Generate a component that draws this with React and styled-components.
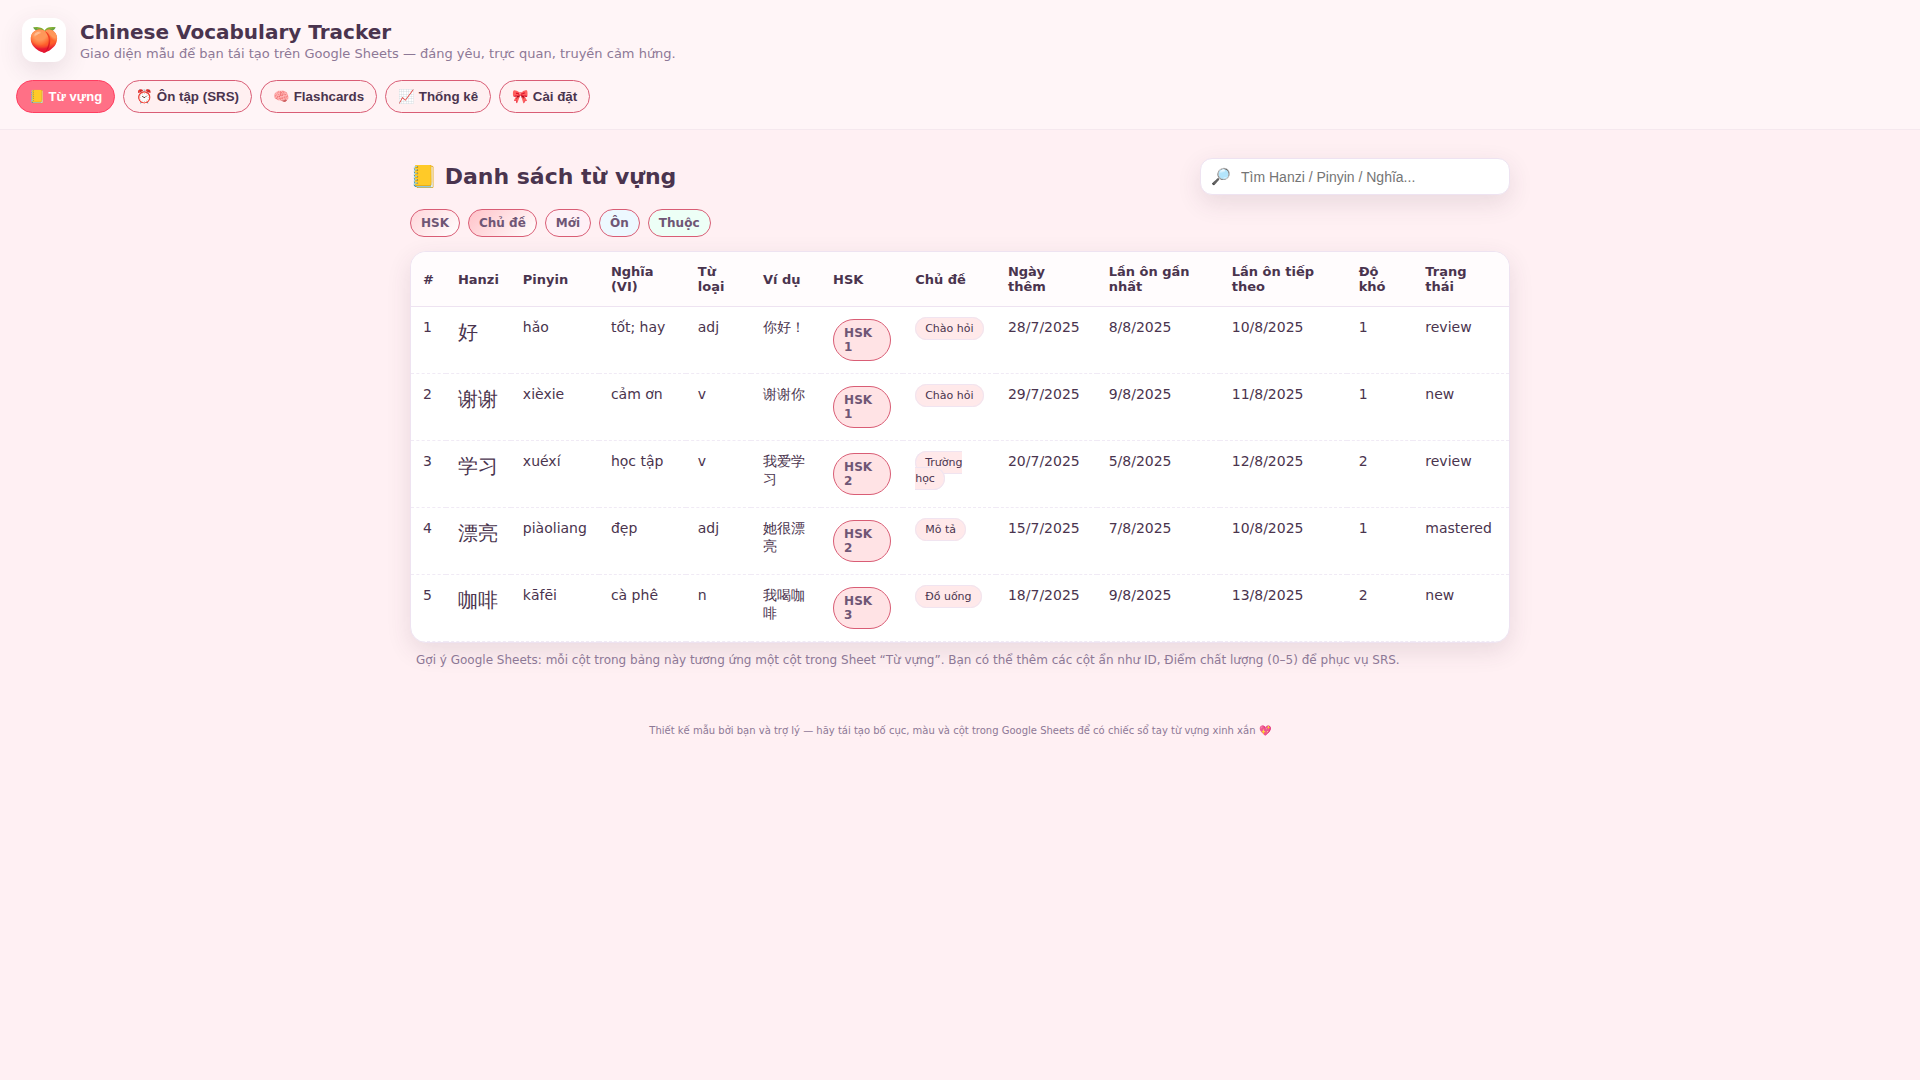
import React, { useState } from "react";
import styled, { createGlobalStyle } from "styled-components";

const GlobalStyle = createGlobalStyle`
  * { box-sizing: border-box; }
  body {
    margin: 0;
    background: #fff0f3;
    color: #4a344e;
    font-family: "DejaVu Sans", sans-serif;
    font-size: 16px;
  }
`;

const Header = styled.header`
  background: #fff5f7;
  border-bottom: 1px solid #f5e8ee;
  padding: 16px;
`;

const Brand = styled.div`
  display: flex;
  align-items: center;
  gap: 14px;
  padding: 2px 6px;
`;

const Logo = styled.div`
  display: grid;
  place-items: center;
  width: 44px;
  height: 44px;
  border-radius: 12px;
  background: #fff;
  box-shadow: 0 8px 24px rgba(74, 52, 78, 0.12);
  font-size: 24px;
`;

const Title = styled.h1`
  margin: 0;
  font-size: 20px;
  line-height: 28px;
`;

const Subtitle = styled.p`
  margin: 0;
  color: #8d7896;
  font-size: 13px;
  line-height: 16px;
`;

const Nav = styled.nav`
  display: flex;
  flex-wrap: wrap;
  gap: 8px;
  margin-top: 16px;
`;

const Tab = styled.button`
  border: 1px solid ${(p) => (p.$active ? "#ff3d60" : "#d95d75")};
  border-radius: 999px;
  padding: 8px 12px;
  background: ${(p) => (p.$active ? "#ff7086" : "#fff0f1")};
  color: ${(p) => (p.$active ? "#fff" : "#4a344e")};
  font-family: "Liberation Sans", Arial, sans-serif;
  font-weight: 700;
  ${(p) => p.$active && "font-size: 13px;"}
  cursor: pointer;
`;

const Main = styled.main`
  max-width: 1132px;
  margin: 0 auto;
  padding: 28px 16px 0;
`;

const Toolbar = styled.div`
  display: flex;
  align-items: center;
  justify-content: space-between;
`;

const Heading = styled.h2`
  margin: 0;
  font-size: 22px;
`;

const Search = styled.label`
  display: flex;
  align-items: center;
  gap: 10px;
  width: 310px;
  height: 37px;
  padding: 0 10px;
  border: 1px solid #eee3f1;
  border-radius: 12px;
  background: #fff;
  box-shadow: 0 8px 24px rgba(74, 52, 78, 0.12);
`;

const SearchInput = styled.input`
  flex: 1;
  min-width: 0;
  border: 0;
  outline: 0;
  padding: 0;
  background: transparent;
  color: inherit;
  font: 14px "Liberation Sans", Arial, sans-serif;
`;

const Chips = styled.div`
  display: flex;
  gap: 8px;
  margin: 14px 0;
`;

const Chip = styled.span`
  display: inline-block;
  padding: 6px 10px;
  border: 1px solid #d95d75;
  border-radius: 999px;
  background: ${(p) => p.$fill};
  color: #6f5675;
  font-size: 12px;
  font-weight: 700;
  line-height: 14px;
`;

const Card = styled.div`
  overflow: hidden;
  border: 1px solid #eee3f1;
  border-radius: 16px;
  background: #fff;
  box-shadow: 0 8px 24px rgba(74, 52, 78, 0.12);
`;

const Table = styled.table`
  width: 100%;
  border-collapse: separate;
  border-spacing: 0;
`;

const Th = styled.th`
  padding: 12px;
  border-bottom: 1px solid #eee3f1;
  background: #fffcfd;
  font-size: 13px;
  line-height: 15px;
  text-align: left;
`;

const Td = styled.td`
  padding: 12px;
  border-bottom: 1px dashed #f0eaf5;
  font-size: ${(p) => (p.$large ? "20px" : "14px")};
  vertical-align: top;
`;

const Tag = styled.span`
  padding: 4px 9px;
  border: 1px solid #f0e4f0;
  border-radius: 999px;
  background: #ffe9ea;
  font-size: 11px;
`;

const Hint = styled.p`
  margin: 10px 6px 0;
  color: #8d7896;
  font-size: 12px;
  line-height: 14px;
`;

const Footer = styled.footer`
  padding: 57px 16px 28px;
  color: #8d7896;
  font-size: 10px;
  line-height: 14px;
  text-align: center;
`;

const tabs = ["📒 Từ vựng", "⏰ Ôn tập (SRS)", "🧠 Flashcards", "📈 Thống kê", "🎀 Cài đặt"];

const chips = [
  ["HSK", "linear-gradient(135deg, #ffd6da, #fff)"],
  ["Chủ đề", "linear-gradient(135deg, #ffc2c8, #fff)"],
  ["Mới", "#fff0f6"],
  ["Ôn", "#edf8ff"],
  ["Thuộc", "#edfff6"],
];

const columns = [
  "#", "Hanzi", "Pinyin", "Nghĩa (VI)", "Từ loại", "Ví dụ", "HSK", "Chủ đề",
  "Ngày thêm", "Lần ôn gần nhất", "Lần ôn tiếp theo", "Độ khó", "Trạng thái",
];

const words = [
  ["好", "hǎo", "tốt; hay", "adj", "你好！", 1, "Chào hỏi", "28/7/2025", "8/8/2025", "10/8/2025", 1, "review"],
  ["谢谢", "xièxie", "cảm ơn", "v", "谢谢你", 1, "Chào hỏi", "29/7/2025", "9/8/2025", "11/8/2025", 1, "new"],
  ["学习", "xuéxí", "học tập", "v", "我爱学习", 2, "Trường học", "20/7/2025", "5/8/2025", "12/8/2025", 2, "review"],
  ["漂亮", "piàoliang", "đẹp", "adj", "她很漂亮", 2, "Mô tả", "15/7/2025", "7/8/2025", "10/8/2025", 1, "mastered"],
  ["咖啡", "kāfēi", "cà phê", "n", "我喝咖啡", 3, "Đồ uống", "18/7/2025", "9/8/2025", "13/8/2025", 2, "new"],
];

export default function App() {
  const [active, setActive] = useState(0);
  const [query, setQuery] = useState("");
  const rows = words.filter((w) => w.join(" ").toLowerCase().includes(query.toLowerCase()));

  return (
    <>
      <GlobalStyle />
      <Header>
        <Brand>
          <Logo>🍑</Logo>
          <div>
            <Title>Chinese Vocabulary Tracker</Title>
            <Subtitle>Giao diện mẫu để bạn tái tạo trên Google Sheets — đáng yêu, trực quan, truyền cảm hứng.</Subtitle>
          </div>
        </Brand>
        <Nav>
          {tabs.map((t, i) => (
            <Tab key={t} type="button" $active={i === active} onClick={() => setActive(i)}>{t}</Tab>
          ))}
        </Nav>
      </Header>
      <Main>
        <Toolbar>
          <Heading>📒 Danh sách từ vựng</Heading>
          <Search>
            <span>🔎</span>
            <SearchInput
              type="text"
              placeholder="Tìm Hanzi / Pinyin / Nghĩa..."
              value={query}
              onChange={(e) => setQuery(e.target.value)}
            />
          </Search>
        </Toolbar>
        <Chips>
          {chips.map(([label, fill]) => (
            <Chip key={label} $fill={fill}>{label}</Chip>
          ))}
        </Chips>
        <Card>
          <Table>
            <thead>
              <tr>{columns.map((c) => <Th key={c} scope="col">{c}</Th>)}</tr>
            </thead>
            <tbody>
              {rows.map(([hanzi, pinyin, meaning, type, example, hsk, topic, ...rest], i) => (
                <tr key={hanzi}>
                  <Td>{i + 1}</Td>
                  <Td $large>{hanzi}</Td>
                  <Td>{pinyin}</Td>
                  <Td>{meaning}</Td>
                  <Td>{type}</Td>
                  <Td>{example}</Td>
                  <Td><Chip $fill="#ffe3e5">HSK {hsk}</Chip></Td>
                  <Td><Tag>{topic}</Tag></Td>
                  {rest.map((value, j) => <Td key={j}>{value}</Td>)}
                </tr>
              ))}
            </tbody>
          </Table>
        </Card>
        <Hint>
          Gợi ý Google Sheets: mỗi cột trong bảng này tương ứng một cột trong Sheet “Từ vựng”. Bạn có thể thêm các cột ẩn như ID, Điểm chất lượng (0–5) để phục vụ SRS.
        </Hint>
      </Main>
      <Footer>Thiết kế mẫu bởi bạn và trợ lý — hãy tái tạo bố cục, màu và cột trong Google Sheets để có chiếc sổ tay từ vựng xinh xắn 💖</Footer>
    </>
  );
}
